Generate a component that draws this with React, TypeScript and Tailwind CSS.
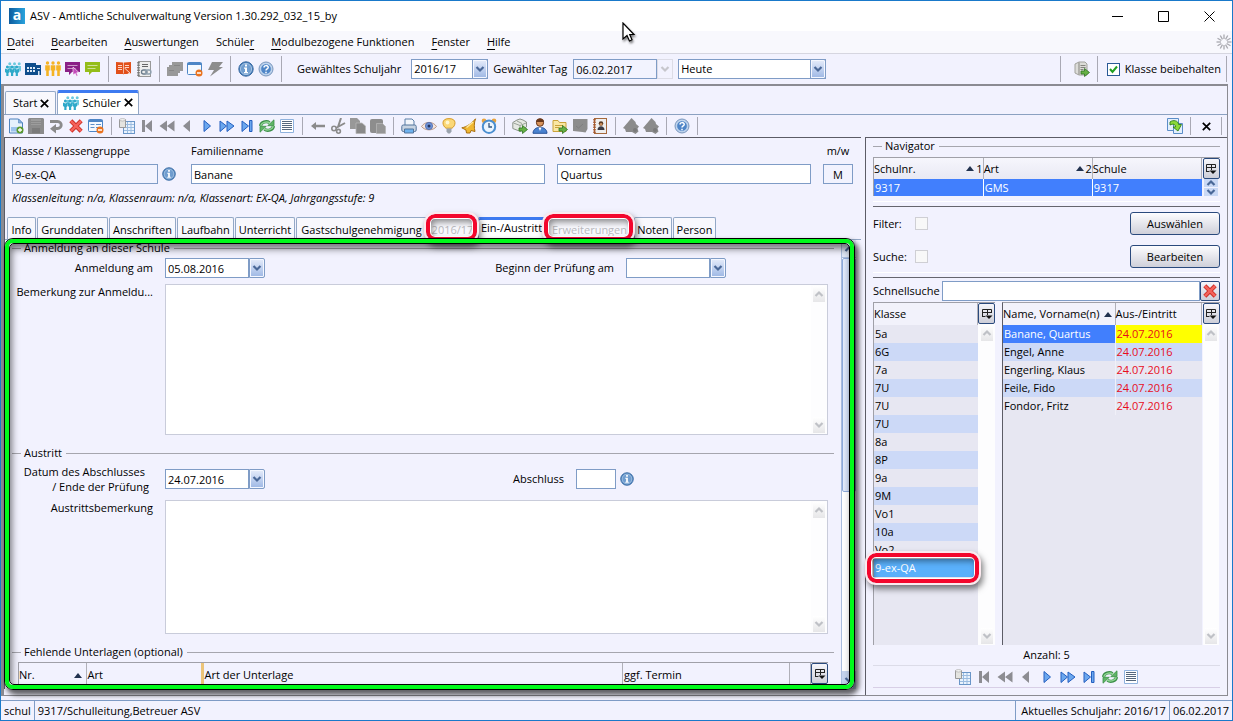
import type { ReactNode } from "react";
import { clsx } from "clsx";

/* ---------- icons ---------- */

const S = ({ children, size = 16 }: { children: ReactNode; size?: number }) => (
  <svg width={size} height={size} viewBox="0 0 16 16" aria-hidden="true" className="shrink-0">
    {children}
  </svg>
);

const People = ({ color }: { color: string }) => (
  <S>
    {[2.5, 8, 13.5].map((x) => (
      <g key={x} fill={color}>
        <circle cx={x} cy="2" r="1.7" />
        <path d={`M${x - 2.3} 4.2h4.600v5.400h-1V15h-2.600V9.600h-1z`} />
      </g>
    ))}
  </S>
);

const Pupils = () => (
  <S>
    <g fill="#6cc9df">
      <circle cx="4.800" cy="2.800" r="1.500" />
      <circle cx="9.500" cy="2.800" r="1.500" />
      <circle cx="14.200" cy="2.800" r="1.500" />
      <path d="M3.500 5h3v4h-3zM8 5h3v4H8zM12.700 5H16v4.500l-1.300 1.500z" />
    </g>
    <g fill="#2fa9c9">
      <circle cx="2.400" cy="6" r="1.500" />
      <circle cx="7" cy="6" r="1.500" />
      <circle cx="11.700" cy="6" r="1.500" />
      <path d="M0 7.500l2.400 1 2.300-1v3.500l-1.200 1V15H1.300v-3L0 11zM5 7.500l2.200 1 2.200-1v3.500l-1.200 1V15H6v-3l-1-1zM9.700 7.500l2.200 1 2.200-1v3.500l-1.200 1V15h-2.200v-3l-1-1z" />
    </g>
  </S>
);

const School = () => (
  <S>
    <path d="M0 2h11v2h5v10H0z" fill="#0f4d8c" />
    <path d="M2 6h2v2H2zm3 0h2v2H5zm3 0h2v2H8zM2 9h2v2H2zm3 0h2v2H5zm3 0h2v2H8zm4-2h3v1h-3zm1 3h1.500v4H13z" fill="#dce8f4" />
  </S>
);

const Board = ({ color, cursor = false }: { color: string; cursor?: boolean }) => (
  <S>
    <path d="M0 1h15v10H7l-3 3v-3H0z" fill={color} />
    <path d="M2.500 4.500h10M2.500 7.500h8" stroke="#fff" strokeWidth="1" opacity=".55" />
    {cursor && <path d="M8 6l6 5.500-2.300.3 1.200 2.900-1.400.6-1.200-2.800L8 14z" fill="#c34bbb" stroke="#fff" strokeWidth=".6" />}
  </S>
);

const RedBook = () => (
  <S>
    <path d="M0 1l7 .5.5.5.5-.5L15 1v12H8l-.5.5L7 13H0z" fill="#e2501b" />
    <path d="M2 4.500h4M2 6.500h4M2 8.500h4M9 4.500h4M9 6.500h4" stroke="#fbd3c4" />
    <path d="M7.500 1.500v11" stroke="#fff" strokeWidth=".6" />
    <path d="M8.500 7l6 5.500-2.500.2 1.300 2.800" fill="#e2501b" stroke="#fff" strokeWidth=".8" />
  </S>
);

const Notebook = ({ person = false }: { person?: boolean }) => (
  <S>
    <rect x="2.500" y=".5" width="12" height="15" fill="#eee" stroke={person ? "#a5693c" : "#999"} />
    <path d="M2.500 1v14" stroke={person ? "#a5562c" : "#777"} strokeWidth="2.500" strokeDasharray="1.500 1" />
    {person ? (
      <>
        <circle cx="9" cy="5.500" r="2.300" fill="#5b3a22" />
        <circle cx="9" cy="6.300" r="1.400" fill="#c98d5c" />
        <path d="M5.500 12c0-5 7-5 7 0z" fill="#3a3a44" />
      </>
    ) : (
      <>
        <path d="M6 3.500h6M6 5.500h6" stroke="#666" />
        <rect x="5.500" y="9" width="5.500" height="4" rx="2" fill="none" stroke="#6b7c8c" strokeWidth="1.300" />
        <rect x="9.500" y="9" width="5.500" height="4" rx="2" fill="none" stroke="#8fa0ae" strokeWidth="1.300" />
      </>
    )}
  </S>
);

const GrayStack = () => (
  <S>
    <path d="M5 1h11v9h-3v2h-2v3H0V6h2V4h3z" fill="#999" />
    <path d="M2 9.500h5M7 4.500h6" stroke="#868686" />
  </S>
);

const FormMinus = ({ lines = false }: { lines?: boolean }) => (
  <S>
    <rect x=".5" y="1.500" width="14" height="12" rx="1" fill="#f4f9ff" stroke="#4d86c6" />
    <path d="M.5 3h14" stroke="#4d86c6" strokeWidth="2" />
    {lines && <path d="M2.500 6.500h4m1.500 0h5M2.500 9.500h4m1.500 0h3" stroke="#5d8fc9" />}
    <circle cx="12" cy="12" r="3.500" fill="#e9731f" />
    <path d="M10 12h4" stroke="#fff" strokeWidth="1.500" />
  </S>
);

const Flash = () => (
  <S>
    <path d="M5 1h11l-4 5h4L3 15.500l4-6.500H1z" fill="#8d8d8d" />
  </S>
);

const Info = ({ size = 16 }: { size?: number }) => (
  <S size={size}>
    <circle cx="8" cy="8" r="7.200" fill="#4c82bd" stroke="#3a6ba3" />
    <circle cx="8" cy="8" r="5.600" fill="#6f9dcf" stroke="#b9d1ea" strokeWidth=".8" />
    <path d="M7 3.500h2v2H7zM6 6.500h3V11h1v1.200H6V11h1V7.700H6z" fill="#fff" />
  </S>
);

const Help = () => (
  <S>
    <circle cx="8" cy="8" r="7" fill="#b9d0ec" stroke="#7b97bd" />
    <circle cx="8" cy="8" r="5.300" fill="#4f86c8" stroke="#dbe7f5" strokeWidth=".6" />
    <path d="M6 6.600C6 4 10.200 4 10.200 6.400 10.200 8 8 7.800 8 9.600M8 10.800v1.400" fill="none" stroke="#fff" strokeWidth="1.500" />
  </S>
);

const NewDoc = () => (
  <S>
    <path d="M1.500 1h9l4 4v10h-13z" fill="#e6f1fc" stroke="#4f83bd" />
    <path d="M10.500 1v4h4z" fill="#8cb4df" stroke="#4f83bd" strokeWidth=".6" />
    <path d="M3 9h7v4.500H3z" fill="#9cc3ec" />
    <circle cx="12" cy="12" r="3.500" fill="#5c9a2e" />
    <path d="M10 12h4M12 10v4" stroke="#fff" strokeWidth="1.300" />
  </S>
);

const Disk = () => (
  <S>
    <path d="M0 1l1-1h14l1 1v15H0z" fill="#8b8b8b" />
    <path d="M3 1h10v6H3z" fill="#9c9c9c" />
    <path d="M4 10h8v5H4z" fill="#7b7b7b" />
    <path d="M3 3.500h10M3 5.500h10" stroke="#898989" strokeWidth="1" />
  </S>
);

const Undo = () => (
  <S>
    <path d="M2 3.500h7.500c5 0 5 7 0 7H7" fill="none" stroke="#8b8b8b" strokeWidth="2.800" />
    <path d="M8 6v9.500L2 10.700z" fill="#8b8b8b" />
  </S>
);

const RedX = () => (
  <S>
    <path d="M2.800 2.800l10.400 10.400M13.200 2.800L2.800 13.200" stroke="#c8281f" strokeWidth="4.200" />
    <path d="M2.800 2.800l10.400 10.400M13.200 2.800L2.800 13.200" stroke="#f4625a" strokeWidth="2.600" />
  </S>
);

const DataSheet = () => (
  <S>
    <rect x="4.500" y="3.500" width="11" height="12" fill="#eaf3fd" stroke="#6a96c8" />
    <path d="M5 6.500h10M5 9.500h10M5 12.500h10M8.500 4v11M12 4v11" stroke="#9bbce0" />
    <path d="M.5 1.500h6v8h-6z" fill="#e4e4e0" stroke="#999" />
    <ellipse cx="3.500" cy="1.800" rx="3" ry="1.200" fill="#f6f6f4" stroke="#aaa" strokeWidth=".7" />
  </S>
);

const First = () => (
  <S>
    <path d="M3 2h3v12H3zM13 2v12L6 8z" fill="#8d8d92" />
  </S>
);
const Rew = () => (
  <S>
    <path d="M8 2.500v11L.5 8zM15.500 2.500v11L8 8z" fill="#8d8d92" />
  </S>
);
const Prev = () => (
  <S>
    <path d="M11 2v12L4 8z" fill="#8d8d92" />
  </S>
);
const Next = () => (
  <S>
    <path d="M5 2.500v11L11.500 8z" fill="#6ba7ee" stroke="#245fc0" />
  </S>
);
const Fwd = () => (
  <S>
    <path d="M1 3v10.500L7.500 8zM8 3v10.500L15 8z" fill="#6ba7ee" stroke="#245fc0" />
  </S>
);
const Last = () => (
  <S>
    <path d="M3 3v10.500L9.500 8zM10.500 2.500h2.500v11h-2.500z" fill="#6ba7ee" stroke="#245fc0" />
  </S>
);

const RefreshArc = () => (
  <>
    <path d="M1.500 8C2 4 7.500 2.500 10.500 4.700" fill="none" stroke="#3b8f48" strokeWidth="3.200" />
    <path d="M15 1.800v5.900H8.700z" fill="#5fb566" stroke="#3b8f48" strokeWidth=".8" />
    <path d="M1.800 7.800C2.500 4.400 7.500 3 10.800 5" fill="none" stroke="#8fd593" strokeWidth="1.500" />
  </>
);

const Refresh = () => (
  <S>
    <RefreshArc />
    <g transform="rotate(180 8 8)">
      <RefreshArc />
    </g>
  </S>
);

const ListIcon = () => (
  <S>
    <path d="M1.500 1.500h13v13h-13z" fill="#fff" stroke="#8fb2dd" />
    <path d="M3 3.500h10M3 5.500h10M3 7.500h10M3 9.500h10M3 11.500h10" stroke="#55677c" />
  </S>
);

const ArrowLeft = () => (
  <S>
    <path d="M1 8l5-4v2.800h9v2.400H6V12z" fill="#8b8b8b" />
  </S>
);

const Scissors = () => (
  <S>
    <path d="M11 0L8 9M15 5L6 10" stroke="#8b8b8b" strokeWidth="2" />
    <circle cx="4" cy="10.500" r="2.200" fill="none" stroke="#8b8b8b" strokeWidth="1.600" />
    <circle cx="8.500" cy="13.300" r="1.900" fill="none" stroke="#8b8b8b" strokeWidth="1.600" />
  </S>
);

const Copy = () => (
  <S>
    <path d="M0 0h7l3 3v8H0z" fill="#989898" />
    <path d="M6 5h6l3.500 3v7.500H6z" fill="#8a8a8a" stroke="#b5b5b5" strokeWidth=".8" />
  </S>
);

const Paste = () => (
  <S>
    <rect x="0" y="1" width="13" height="14" rx="2" fill="#8d8d8d" />
    <path d="M6.500 5.500h6l3 3v7h-9z" fill="#969696" stroke="#b5b5b5" strokeWidth=".8" />
  </S>
);

const Printer = () => (
  <S>
    <path d="M4 1h7l2 2v5H4z" fill="#f3f6fb" stroke="#5a7fa8" />
    <rect x=".8" y="7" width="14.400" height="6.500" rx="1.500" fill="#c8d4e2" stroke="#53749b" />
    <path d="M3.500 11h9v4h-9z" fill="#6eb2ee" stroke="#53749b" />
  </S>
);

const Eye = () => (
  <S>
    <path d="M.5 8.500C4 3 12 3 15.500 8.500 12 13 4 13 .5 8.500z" fill="#f6e6dd" stroke="#b99a8b" />
    <circle cx="8" cy="8" r="3.600" fill="#6f93d6" stroke="#4b68ad" strokeWidth=".8" />
    <circle cx="8" cy="8" r="1.500" fill="#24345f" />
  </S>
);

const Bulb = () => (
  <S>
    <path d="M8 .6c-8.500 0-6.500 7.500-3 9.600h6c3.500-2.100 5.500-9.600-3-9.600z" fill="#fbd876" stroke="#d59b29" />
    <circle cx="6.500" cy="4.500" r="1.900" fill="#fff6cf" />
    <path d="M5.500 10.500h5v3l-1.500 2H7l-1.500-2z" fill="#9aa3ad" />
  </S>
);

const Horn = () => (
  <S>
    <path d="M14.500.8c-1.500 4-1.500 9-.5 12.700L10 12.500l-1 2.500H5.500L5 12 .8 9.800C6 9 11 5 14.500.8z" fill="#f0b832" stroke="#a86f10" />
    <path d="M12 4L5.500 9.500" stroke="#ffe9a0" strokeWidth="1.500" />
  </S>
);

const Alarm = () => (
  <S>
    <circle cx="3" cy="2.800" r="2.300" fill="#e8a33d" />
    <circle cx="13" cy="2.800" r="2.300" fill="#e8a33d" />
    <circle cx="8" cy="8.700" r="6.200" fill="#eaf4fe" stroke="#4b8fd0" strokeWidth="2" />
    <path d="M8 5v4h3" fill="none" stroke="#31557e" strokeWidth="1.300" />
  </S>
);

const GreenArrow = () => (
  <path d="M7 10h3.500V7.500L15.500 11.500l-5 4V13H7z" fill="#66b145" stroke="#2f7322" strokeWidth=".8" />
);

const Cubes = () => (
  <S>
    <path d="M5 2l3-1 3 1 3.500 2v5l-6 4.500L.8 10.500V4.500z" fill="#e6e9e3" stroke="#8c948a" />
    <path d="M1.500 5L8 7.500 14 5M8 7.500V13M5 3l5 2.500" stroke="#9aa298" fill="none" />
    <GreenArrow />
  </S>
);

const Person = () => (
  <S>
    <circle cx="8" cy="4.700" r="3.600" fill="#d9945c" stroke="#69381b" />
    <path d="M4 4c0-5 8-5 8 0z" fill="#69381b" />
    <path d="M1 15.300c0-8 14-8 14 0z" fill="#4a82cf" stroke="#2a549a" />
    <path d="M6.500 9.500L8 13l1.500-3.500z" fill="#fff" />
  </S>
);

const FolderArrow = () => (
  <S>
    <path d="M1 2.500h5l1.500 2H14v9H1z" fill="#f9e7a4" stroke="#c9a23a" />
    <path d="M3 7.500h8M3 9.500h4" stroke="#c9a23a" />
    <GreenArrow />
  </S>
);

const GrayNote = () => (
  <S>
    <path d="M1 1h14.500v10l-2 3.500-3-.5-9.500-1z" fill="#8d8d8d" />
    <path d="M4 8l2.500 2L11 6" stroke="#7f7f7f" fill="none" />
  </S>
);

const GrayHouse = () => (
  <S>
    <path d="M8.500 0l4 4 .5 2 3 2.500-1.500 2 1 3-3 2.500L9 14H3l-1-3L0 10z" fill="#8b8b8b" />
    <circle cx="12" cy="12" r="2" fill="#7a7a7a" />
  </S>
);

const DbArrow = () => (
  <S>
    <path d="M1 3l4-2h6l2 2v11H5l-4-2z" fill="#dcdcd8" stroke="#a2a29c" />
    <path d="M5 1.500v12M6.500 4.500h5M6.500 6.500h5M6.500 8.500h3" stroke="#85857f" />
    <GreenArrow />
  </S>
);

const Sync = () => (
  <S>
    <path d="M.5.5h11v12H.5z" fill="#e3effc" stroke="#5b8dc8" />
    <path d="M6.500 5.500h9v10h-9z" fill="#e3effc" stroke="#5b8dc8" />
    <path d="M3 4c3-2.500 8.500-1.500 8.500 2.500H14.500l-3.500 6.500-5-4h2.500C8.500 6 6 5.500 3 7z" fill="#8bd93a" stroke="#2f7d18" strokeWidth=".9" />
  </S>
);

const ColumnPicker = () => (
  <svg width="12" height="12" viewBox="0 0 12 12" aria-hidden="true">
    <path d="M1.500 9v-7.500h9V5M1 4.500h10M6.500 1.500V7M1 8.500h3.500" fill="none" stroke="#222" />
    <path d="M4.500 7.500h7L8 11z" fill="#111" />
  </svg>
);

const Chevron = ({ up = false, color = "#4a6898" }: { up?: boolean; color?: string }) => (
  <svg width="10" height="8" viewBox="0 0 10 8" aria-hidden="true">
    <path d={up ? "M1.500 6L5 2.500 8.500 6" : "M1.500 2L5 5.500 8.500 2"} fill="none" stroke={color} strokeWidth="2.200" />
  </svg>
);

const SortUp = () => (
  <svg width="8" height="5" viewBox="0 0 8 5" aria-hidden="true" className="shrink-0">
    <path d="M0 5h8L4 0z" fill="#22324f" />
  </svg>
);

/* ---------- small building blocks ---------- */

const Sep = () => <span className="mx-[5px] h-[26px] w-px shrink-0 bg-[#a9a9b4]" />;
const ShortSep = () => <span className="mx-[5px] h-[18px] w-px shrink-0 bg-[#a9a9b4]" />;

const Tool = ({ label, children }: { label: string; children: ReactNode }) => (
  <button type="button" aria-label={label} className="flex h-5 w-5 shrink-0 items-center justify-center">
    {children}
  </button>
);

const Close = ({ label }: { label: string }) => (
  <button type="button" aria-label={label}>
    <svg width="9" height="9" viewBox="0 0 9 9" aria-hidden="true">
      <path d="M.8.8l7.400 7.400M8.200.8L.8 8.200" stroke="#000" strokeWidth="1.700" />
    </svg>
  </button>
);

const dropClass =
  "flex h-5 w-4 shrink-0 items-center justify-center rounded-r-[2px] border border-[#7f9cc6] bg-linear-to-b from-[#e6ecfa] to-[#9db7e4] inset-ring inset-ring-[#f4f7ff]";

function DateBox({ id, label, value }: { id: string; label: string; value: string }) {
  return (
    <div className="flex">
      <input id={id} defaultValue={value} className="h-5 w-[84px] border border-[#7f9cc6] bg-white px-[2px]" />
      <button type="button" aria-label={`${label} auswählen`} className={dropClass}>
        <Chevron />
      </button>
    </div>
  );
}

function SelectBox({ id, value, width }: { id: string; value: string; width: string }) {
  return (
    <div className={clsx("relative flex", width)}>
      <select id={id} className="h-5 w-full appearance-none border border-[#7f9cc6] bg-white px-[2px] pr-4">
        <option>{value}</option>
      </select>
      <span className="pointer-events-none absolute right-0 top-0">
        <span className={dropClass}>
          <Chevron />
        </span>
      </span>
    </div>
  );
}

const ScrollArrow = ({ up = false }: { up?: boolean }) => (
  <button
    type="button"
    aria-label={up ? "Nach oben" : "Nach unten"}
    className="flex h-4 w-3 items-center justify-center bg-linear-to-b from-white to-[#e6e6e8]"
  >
    <Chevron up={up} color="#bfc1c6" />
  </button>
);

const ScrollTrack = () => (
  <div className="flex w-4 shrink-0 flex-col items-center justify-between bg-[#fdfdfe] py-px">
    <ScrollArrow up />
    <ScrollArrow />
  </div>
);

function TextBox({ id, height }: { id: string; height: string }) {
  return (
    <div className={clsx("flex min-w-0 flex-1 border border-[#c9ccda] bg-white", height)}>
      <textarea id={id} className="min-w-0 flex-1 resize-none px-[2px] outline-none" />
      <ScrollTrack />
    </div>
  );
}

const Legend = ({ children }: { children: ReactNode }) => (
  <div className="flex h-4 items-center">
    <span className="mr-[3px] h-px w-[9px] bg-[#a6a6ae]" />
    <span>{children}</span>
    <span className="ml-1 h-px flex-1 bg-[#a6a6ae]" />
  </div>
);

const PickerButton = () => (
  <button
    type="button"
    aria-label="Spalten wählen"
    className="flex h-[21px] w-[17px] shrink-0 items-center justify-center rounded-[2px] border border-[#2a4a7d] bg-linear-to-b from-[#f6f6fb] to-[#cdced8]"
  >
    <ColumnPicker />
  </button>
);

const RedMark = ({ place }: { place: string }) => (
  <span
    className={clsx(
      "pointer-events-none absolute z-10 rounded-[9px] border-[4px] border-[#f3062c] outline-2 outline-[#fbe9ee] shadow-[inset_0_0_0_1px_#fff,inset_2px_4px_6px_rgba(0,0,0,0.45),2px_4px_6px_2px_rgba(0,0,0,0.5)]",
      place,
    )}
  />
);

const NavTools = () => (
  <>
    <Tool label="Datenblatt"><DataSheet /></Tool>
    <Tool label="Erster"><First /></Tool>
    <Tool label="Schnell zurück"><Rew /></Tool>
    <Tool label="Zurück"><Prev /></Tool>
    <Tool label="Weiter"><Next /></Tool>
    <Tool label="Schnell vor"><Fwd /></Tool>
    <Tool label="Letzter"><Last /></Tool>
    <Tool label="Aktualisieren"><Refresh /></Tool>
    <Tool label="Liste"><ListIcon /></Tool>
  </>
);

/* ---------- window chrome ---------- */

function TitleBar() {
  return (
    <header className="flex h-[30px] shrink-0 items-center bg-white pl-2">
      <span className="mr-[5px] flex h-4 w-4 items-center justify-center bg-linear-to-r from-[#0d5c9e] to-[#2aa3dd] pb-[2px] text-[14px] font-bold text-white">
        a
      </span>
      <h1 className="flex-1">ASV - Amtliche Schulverwaltung Version 1.30.292_032_15_by</h1>
      <button type="button" aria-label="Minimieren" className="flex w-[46px] justify-center">
        <svg width="11" height="11" viewBox="0 0 11 11"><path d="M0 5.500h11" stroke="#000" /></svg>
      </button>
      <button type="button" aria-label="Maximieren" className="flex w-[46px] justify-center">
        <svg width="11" height="11" viewBox="0 0 11 11"><path d="M.5.5h10v10H.5z" fill="none" stroke="#000" /></svg>
      </button>
      <button type="button" aria-label="Schließen" className="flex w-[46px] justify-center">
        <svg width="11" height="11" viewBox="0 0 11 11"><path d="M.5.5l10 10M10.500.5l-10 10" stroke="#000" /></svg>
      </button>
    </header>
  );
}

const menus: [string, string, string][] = [
  ["", "D", "atei"],
  ["", "B", "earbeiten"],
  ["", "A", "uswertungen"],
  ["Schüle", "r", ""],
  ["", "M", "odulbezogene Funktionen"],
  ["", "F", "enster"],
  ["", "H", "ilfe"],
];

function MenuBar() {
  return (
    <nav className="flex h-[23px] shrink-0 items-center gap-[17px] border-b border-[#d6d6e0] bg-[#f8f8fd] pl-[6px]">
      {menus.map(([pre, key, post]) => (
        <button type="button" key={pre + key + post} className="whitespace-nowrap">
          {pre}
          <span className="underline underline-offset-[3px]">{key}</span>
          {post}
        </button>
      ))}
      <svg width="16" height="16" viewBox="0 0 16 16" className="ml-auto" aria-hidden="true">
        {[0, 30, 60, 90, 120, 150, 180, 210, 240, 270, 300, 330].map((a) => (
          <path key={a} d="M8 .5v4.500" stroke="#a9a9b0" strokeWidth="1.300" transform={`rotate(${a} 8 8)`} />
        ))}
      </svg>
    </nav>
  );
}

function MainToolbar() {
  return (
    <div className="flex h-[30px] shrink-0 items-center bg-[#f2f2fe] pl-[2px]">
      <Tool label="Schüler"><Pupils /></Tool>
      <Tool label="Schule"><School /></Tool>
      <Tool label="Klassen"><People color="#f5b324" /></Tool>
      <Tool label="Unterricht"><Board color="#8a1f86" cursor /></Tool>
      <Tool label="Nachrichten"><Board color="#94bd19" /></Tool>
      <Sep />
      <Tool label="Buch"><RedBook /></Tool>
      <Tool label="Notizbuch"><Notebook /></Tool>
      <Sep />
      <Tool label="Stapel"><GrayStack /></Tool>
      <Tool label="Formular schließen"><FormMinus /></Tool>
      <Tool label="Schnellzugriff"><Flash /></Tool>
      <Sep />
      <Tool label="Info"><Info /></Tool>
      <Tool label="Hilfe"><Help /></Tool>
      <Sep />
      <label htmlFor="jahr" className="mx-[10px] whitespace-nowrap">Gewähltes Schuljahr</label>
      <SelectBox id="jahr" value="2016/17" width="w-[77px]" />
      <label htmlFor="tag" className="ml-[5px] mr-[6px] whitespace-nowrap">Gewählter Tag</label>
      <input id="tag" defaultValue="06.02.2017" readOnly className="h-5 w-[84px] border border-[#7f9cc6] bg-[#f2f3fe] px-[2px]" />
      <button type="button" disabled aria-label="Tag auswählen" className="flex h-5 w-4 items-center justify-center border border-[#dcdce6]">
        <Chevron color="#c6c6cc" />
      </button>
      <div className="ml-[5px]">
        <SelectBox id="heute" value="Heute" width="w-[148px]" />
      </div>
      <div className="ml-auto flex items-center">
        <Sep />
        <span className="ml-[6px]"><Tool label="Exportieren"><DbArrow /></Tool></span>
        <Sep />
        <label className="flex items-center gap-[5px] whitespace-nowrap pl-1">
          <span className="relative flex">
            <input type="checkbox" defaultChecked className="peer h-[13px] w-[13px] appearance-none border border-[#2a5a96] bg-white" />
            <svg width="13" height="13" viewBox="0 0 13 13" className="pointer-events-none absolute inset-0 hidden peer-checked:block" aria-hidden="true">
              <path d="M3 6l2.500 3L10 3.500" fill="none" stroke="#22a022" strokeWidth="2" />
            </svg>
          </span>
          Klasse beibehalten
        </label>
        <Sep />
      </div>
    </div>
  );
}

function DocumentTabs() {
  return (
    <div className="flex items-end bg-[#f2f2fe] pl-px pt-1">
      <div className="flex h-[23px] items-center gap-[3px] rounded-t-[2px] border border-b-0 border-[#93a8c6] bg-[#f8f8fd] pl-[7px] pr-[6px]">
        Start <Close label="Start schließen" />
      </div>
      <div className="ml-px flex h-6 items-center gap-[3px] rounded-t-[2px] border border-b-0 border-[#93a8c6] border-t-[#3d7af0] bg-white px-[5px] inset-shadow-[0_2px_0_#3d7af0]">
        <Pupils /> Schüler <Close label="Schüler schließen" />
      </div>
    </div>
  );
}

function RecordToolbar() {
  return (
    <div className="flex h-[23px] shrink-0 items-center border-t border-[#8ba1c1] bg-[#f2f2fe] pl-[2px]">
      <Tool label="Neu"><NewDoc /></Tool>
      <Tool label="Speichern"><Disk /></Tool>
      <Tool label="Rückgängig"><Undo /></Tool>
      <Tool label="Löschen"><RedX /></Tool>
      <Tool label="Formular leeren"><FormMinus lines /></Tool>
      <ShortSep />
      <NavTools />
      <ShortSep />
      <Tool label="Zurückgehen"><ArrowLeft /></Tool>
      <Tool label="Ausschneiden"><Scissors /></Tool>
      <Tool label="Kopieren"><Copy /></Tool>
      <Tool label="Einfügen"><Paste /></Tool>
      <ShortSep />
      <Tool label="Drucken"><Printer /></Tool>
      <Tool label="Vorschau"><Eye /></Tool>
      <Tool label="Hinweis"><Bulb /></Tool>
      <Tool label="Signal"><Horn /></Tool>
      <Tool label="Wiedervorlage"><Alarm /></Tool>
      <ShortSep />
      <Tool label="Module"><Cubes /></Tool>
      <Tool label="Person"><Person /></Tool>
      <Tool label="Ordner"><FolderArrow /></Tool>
      <Tool label="Notiz"><GrayNote /></Tool>
      <Tool label="Adressbuch"><Notebook person /></Tool>
      <ShortSep />
      <Tool label="Haus"><GrayHouse /></Tool>
      <Tool label="Haus wechseln"><GrayHouse /></Tool>
      <ShortSep />
      <Tool label="Hilfe"><Help /></Tool>
      <ShortSep />
      <div className="ml-auto flex items-center">
        <Tool label="Abgleichen"><Sync /></Tool>
        <ShortSep />
        <span className="flex w-5 justify-center"><Close label="Modul schließen" /></span>
        <ShortSep />
      </div>
    </div>
  );
}

/* ---------- record form ---------- */

const tabs: { name: string; width: string; off?: boolean; active?: boolean }[] = [
  { name: "Info", width: "w-[29px]" },
  { name: "Grunddaten", width: "w-[71px]" },
  { name: "Anschriften", width: "w-[67px]" },
  { name: "Laufbahn", width: "w-[57px]" },
  { name: "Unterricht", width: "w-[60px]" },
  { name: "Gastschulgenehmigung", width: "w-[131px]" },
  { name: "2016/17", width: "w-[49px]", off: true },
  { name: "Ein-/Austritt", width: "w-[67px]", active: true },
  { name: "Erweiterungen", width: "w-[87px]", off: true },
  { name: "Noten", width: "w-[38px]" },
  { name: "Person", width: "w-[43px]" },
];

const fieldClass = "h-5 w-full border border-[#7f9cc6] px-[2px]";

function RecordHead() {
  return (
    <div className="pl-[7px] pr-2 pt-[5px]">
      <div className="flex items-end">
        <div className="flex w-[146px] shrink-0 flex-col gap-[5px]">
          <label htmlFor="klasse">Klasse / Klassengruppe</label>
          <input id="klasse" readOnly defaultValue="9-ex-QA" className={clsx(fieldClass, "bg-[#f2f3fe]")} />
        </div>
        <button type="button" aria-label="Klasseninfo" className="mb-[3px] ml-1 mr-[15px]"><Info size={14} /></button>
        <div className="flex flex-[355] flex-col gap-[5px]">
          <label htmlFor="name">Familienname</label>
          <input id="name" defaultValue="Banane" className={clsx(fieldClass, "bg-white")} />
        </div>
        <div className="ml-3 flex flex-[254] flex-col gap-[5px]">
          <label htmlFor="vorname">Vornamen</label>
          <input id="vorname" defaultValue="Quartus" className={clsx(fieldClass, "bg-white")} />
        </div>
        <div className="ml-3 flex w-[30px] shrink-0 flex-col gap-[5px]">
          <label htmlFor="mw" className="text-center">m/w</label>
          <input id="mw" readOnly defaultValue="M" className={clsx(fieldClass, "bg-[#f2f3fe] text-center")} />
        </div>
      </div>
      <p className="mt-[6px] italic">Klassenleitung: n/a, Klassenraum: n/a, Klassenart: EX-QA, Jahrgangsstufe: 9</p>
    </div>
  );
}

function RecordTabs() {
  return (
    <div role="tablist" className="mt-[11px] flex gap-px pl-[2px]">
      {tabs.map((t) => (
        <div key={t.name} className={clsx("relative flex", t.width)}>
          <button
            type="button"
            role="tab"
            aria-selected={!!t.active}
            disabled={t.off}
            className={clsx(
              "flex h-[22px] w-full justify-center whitespace-nowrap rounded-t-[2px] border border-b-0 border-[#93a8c6]",
              t.active ? "bg-white pt-[2px] border-t-[#3d7af0] inset-shadow-[0_2px_0_#3d7af0]" : "bg-[#f8f8fd] pt-1",
              t.off && "text-[#b9b9bd]",
            )}
          >
            {t.name}
          </button>
          {t.off && <RedMark place="-left-[2px] right-0 -top-[3px] -bottom-[2px]" />}
        </div>
      ))}
    </div>
  );
}

const labelClass = "w-[141px] shrink-0 whitespace-nowrap text-right";

function RecordForm() {
  return (
    <div className="relative flex min-h-0 flex-1">
      <div className="flex min-h-0 flex-1 overflow-hidden border-t border-[#93a8c6] pl-[7px] pr-[5px]">
        <div className="min-w-0 flex-1 pr-[7px]">
          <Legend>Anmeldung an dieser Schule</Legend>
          <div className="mt-[2px] flex items-center">
            <label htmlFor="anmeldung" className={labelClass}>Anmeldung am</label>
            <div className="ml-3"><DateBox id="anmeldung" label="Anmeldung" value="05.08.2016" /></div>
            <label htmlFor="beginn" className="ml-auto mr-3">Beginn der Prüfung am</label>
            <div className="mr-[108px]"><DateBox id="beginn" label="Beginn" value="" /></div>
          </div>
          <div className="mt-[6px] flex pr-[6px]">
            <label htmlFor="bemerkung" className={labelClass}>Bemerkung zur Anmeldu...</label>
            <div className="ml-3 flex min-w-0 flex-1"><TextBox id="bemerkung" height="h-[151px]" /></div>
          </div>
          <div className="mt-[10px]"><Legend>Austritt</Legend></div>
          <div className="mt-[3px] flex items-center">
            <label htmlFor="abschlussdatum" className="w-[141px] shrink-0 pr-1 text-right leading-[15px]">
              <span className="block pr-1">Datum des Abschlusses</span>
              <span className="block">/ Ende der Prüfung</span>
            </label>
            <div className="ml-3"><DateBox id="abschlussdatum" label="Abschlussdatum" value="24.07.2016" /></div>
            <label htmlFor="abschluss" className="ml-auto mr-3">Abschluss</label>
            <input id="abschluss" className="h-5 w-10 border border-[#7f9cc6] bg-white px-[2px]" />
            <button type="button" aria-label="Abschlussinfo" className="ml-1 mr-[200px]"><Info size={14} /></button>
          </div>
          <div className="mt-[6px] flex pr-[6px]">
            <label htmlFor="austritt" className={labelClass}>Austrittsbemerkung</label>
            <div className="ml-3 flex min-w-0 flex-1"><TextBox id="austritt" height="h-[134px]" /></div>
          </div>
          <div className="mt-[10px]"><Legend>Fehlende Unterlagen (optional)</Legend></div>
          <div className="mx-[6px] mt-[2px] flex border-t border-l border-[#a0a0a8]">
            <table className="h-6 flex-1 table-fixed border-collapse text-left">
              <thead>
                <tr>
                  <th className="w-[67px] p-0 font-normal">
                    <span className="flex items-center justify-between pr-1">Nr. <SortUp /></span>
                  </th>
                  <th className="w-[116px] border-l border-[#b0b0b8] p-0 pl-px font-normal">Art</th>
                  <th className="border-l-[3px] border-[#ecc478] p-0 pl-px font-normal">Art der Unterlage</th>
                  <th className="w-[167px] border-l border-[#b0b0b8] p-0 pl-px font-normal">ggf. Termin</th>
                  <th aria-label="Aktion" className="w-[21px] border-x border-[#b0b0b8] p-0" />
                </tr>
              </thead>
            </table>
            <PickerButton />
          </div>
        </div>
        <div className="flex w-[15px] shrink-0 flex-col border-l border-[#a9bcdc] bg-white">
          <button type="button" aria-label="Nach oben" className="flex h-[18px] items-center justify-center border-b border-[#a9bcdc] bg-[#dfe7f7]">
            <Chevron up />
          </button>
          <div className="h-[234px] rounded-[2px] border border-[#8eaadb] bg-linear-to-r from-[#e6edfb] to-[#b4c9ee]" />
          <button type="button" aria-label="Nach unten" className="mt-auto flex h-[18px] items-center justify-center bg-[#c5d3ee]">
            <Chevron />
          </button>
        </div>
      </div>
      <div className="pointer-events-none absolute -bottom-px -left-px right-[6px] -top-px z-20 rounded-[9px] border border-black shadow-[3px_4px_5px_1px_rgba(0,0,0,0.6)]">
        <div className="h-full rounded-[8px] border-4 border-[#00fa1a]">
          <div className="h-full rounded-[5px] border border-black shadow-[inset_2px_5px_7px_rgba(0,0,0,0.5)]" />
        </div>
      </div>
    </div>
  );
}

/* ---------- navigator ---------- */

const classes = ["5a", "6G", "7a", "7U", "7U", "7U", "8a", "8P", "9a", "9M", "Vo1", "10a", "Vo2", "9-ex-QA"];
const pupils = ["Banane, Quartus", "Engel, Anne", "Engerling, Klaus", "Feile, Fido", "Fondor, Fritz"];

const headCell = "border-r border-[#b0b0b8] p-0 font-normal";

const actionClass =
  "h-[23px] w-[90px] rounded-[3px] border border-[#2a4a7d] bg-linear-to-b from-[#fdfdff] to-[#cfd0da]";

function Navigator() {
  return (
    <aside className="flex w-[362px] shrink-0 flex-col border-l border-t border-[#5c5c66] bg-[#f2f2fe] pl-[7px] pr-[7px]">
      <Legend>Navigator</Legend>
      <div className="mt-[3px] flex border-l border-t border-[#a0a0a8]">
        <div className="min-w-0 flex-1">
          <table className="w-full table-fixed border-collapse text-left">
            <thead>
              <tr className="h-[21px] bg-linear-to-b from-[#f6f6fd] to-[#e9e9f3]">
                <th className={headCell}>
                  <span className="flex items-center justify-between">Schulnr. <span className="flex items-center gap-[2px]"><SortUp />1</span></span>
                </th>
                <th className={headCell}>
                  <span className="flex items-center justify-between">Art <span className="flex items-center gap-[2px]"><SortUp />2</span></span>
                </th>
                <th className={headCell}>Schule</th>
              </tr>
            </thead>
            <tbody>
              <tr className="bg-[#417ffd] text-white">
                <td className="h-[17px] border-r border-white p-0 pl-px leading-[17px]">9317</td>
                <td className="border-r border-white p-0 pl-px leading-[17px]">GMS</td>
                <td className="p-0 pl-px leading-[17px]">9317</td>
              </tr>
            </tbody>
          </table>
        </div>
        <div className="flex w-[18px] flex-col items-center">
          <PickerButton />
          <button type="button" aria-label="Zeile hoch" className="flex h-2 w-[14px] items-center justify-center bg-[#c9d8f5]"><Chevron up /></button>
          <button type="button" aria-label="Zeile runter" className="mt-px flex h-2 w-[14px] items-center justify-center bg-[#c9d8f5]"><Chevron /></button>
        </div>
      </div>
      <div className="mt-[5px] h-[6px] border-b border-t border-b-[#66666e] border-t-white" />
      <div className="mt-[5px] flex items-center">
        <label htmlFor="filter" className="w-[42px]">Filter:</label>
        <input id="filter" type="checkbox" className="h-[13px] w-[13px] appearance-none border border-[#cfcfd4] bg-[#f8f8f8]" />
        <button type="button" className={clsx(actionClass, "ml-auto")}>Auswählen</button>
      </div>
      <div className="mt-[10px] flex items-center">
        <label htmlFor="suche" className="w-[42px]">Suche:</label>
        <input id="suche" type="checkbox" className="h-[13px] w-[13px] appearance-none border border-[#cfcfd4] bg-[#f8f8f8]" />
        <button type="button" className={clsx(actionClass, "ml-auto")}>Bearbeiten</button>
      </div>
      <div className="mt-1 h-[6px] border-b border-t border-b-[#66666e] border-t-white" />
      <div className="mt-[3px] flex items-center">
        <label htmlFor="schnellsuche" className="w-[69px] whitespace-nowrap">Schnellsuche</label>
        <input id="schnellsuche" className="h-5 min-w-0 flex-1 border border-[#7f9cc6] bg-white px-[2px]" />
        <button type="button" aria-label="Suche leeren" className="flex h-5 w-5 items-center justify-center rounded-[2px] border border-[#2a4a7d] bg-linear-to-b from-[#f6f6fb] to-[#cdced8]"><RedX /></button>
      </div>

      <div className="mt-px flex min-h-0 flex-1">
        <div className="relative mr-[7px] flex w-[122px] shrink-0 border-l border-t border-[#a0a0a8]">
          <div className="flex-1 bg-[#e7e7f2]">
            <table className="w-full table-fixed border-collapse text-left">
              <thead>
                <tr className="h-[22px] bg-[#f2f2fb]"><th className={headCell}>Klasse</th></tr>
              </thead>
              <tbody>
                {classes.map((c, i) => (
                  <tr
                    key={i}
                    className={clsx(c === "9-ex-QA" ? "bg-[#5ab0fb] text-white" : i % 2 ? "bg-[#ccd9f7]" : "bg-[#e7e7f2]")}
                  >
                    <td className="h-[18px] p-0 pl-px leading-[18px]">
                      {c === "9-ex-QA" ? (
                        <span className="relative block">
                          {c}
                          <RedMark place="-left-[8px] -right-[1px] -top-[6px] -bottom-[6px]" />
                        </span>
                      ) : (
                        c
                      )}
                    </td>
                  </tr>
                ))}
              </tbody>
            </table>
          </div>
          <div className="flex w-[17px] flex-col">
            <PickerButton />
            <div className="flex flex-1 justify-center bg-[#fdfdfe]"><ScrollTrack /></div>
          </div>
        </div>
        <div className="flex min-w-0 flex-1 border-l border-t border-l-[#5c5c66] border-t-[#a0a0a8]">
          <div className="flex-1 bg-[#e7e7f2]">
            <table className="w-full table-fixed border-collapse text-left">
              <thead>
                <tr className="h-[22px] bg-[#f2f2fb]">
                  <th className={clsx(headCell, "w-[112px]")}>
                    <span className="flex items-center justify-between whitespace-nowrap pr-[3px]">Name, Vorname(n) <SortUp /></span>
                  </th>
                  <th className={headCell}>Aus-/Eintritt</th>
                </tr>
              </thead>
              <tbody>
                {pupils.map((p, i) => (
                  <tr key={p} className={i % 2 ? "bg-[#ccd9f7]" : "bg-[#e7e7f2]"}>
                    <td className={clsx("h-[18px] border-r border-[#f0f0f8] p-0 pl-px leading-[18px]", i === 0 && "bg-[#417ffd] text-white")}>{p}</td>
                    <td className={clsx("p-0 pl-px leading-[18px] text-[#e80c1c]", i === 0 && "bg-[#ffff00]")}>24.07.2016</td>
                  </tr>
                ))}
              </tbody>
            </table>
          </div>
          <div className="flex w-[18px] flex-col items-center">
            <PickerButton />
            <div className="flex flex-1 justify-center bg-[#fdfdfe]"><ScrollTrack /></div>
          </div>
        </div>
      </div>

      <p className="mt-[2px] text-center">Anzahl: 5</p>
      <div className="mt-[2px] flex h-[23px] items-center justify-center gap-px border-y border-b-[#d8cfe6] border-t-[#dcdce8]">
        <NavTools />
      </div>
      <div className="h-[7px]" />
    </aside>
  );
}

/* ---------- page ---------- */

export default function App() {
  return (
    <div className="relative flex h-screen flex-col overflow-hidden border border-[#1979ca] bg-[#f2f2fe] font-['Open_Sans','Noto_Sans',sans-serif] text-[11px] leading-4 text-black">
      <TitleBar />
      <MenuBar />
      <MainToolbar />
      <main className="mr-1 flex min-h-0 flex-1 flex-col border-b border-l-[3px] border-t-2 border-[#8b8b92] border-r">
        <DocumentTabs />
        <RecordToolbar />
        <div className="flex min-h-0 flex-1 bg-[#f2f2fe]">
          <section className="mb-[6px] mr-1 flex min-w-0 flex-1 flex-col border-l border-t border-[#5c5c66]">
            <RecordHead />
            <RecordTabs />
            <RecordForm />
          </section>
          <Navigator />
        </div>
      </main>
      <footer className="mt-1 flex h-5 shrink-0 items-center border-t border-[#7f9cc6]">
        <span className="border-r border-[#7f9cc6] px-[3px] leading-5">schul</span>
        <span className="flex-1 border-r border-[#7f9cc6] px-[3px] leading-5">9317/Schulleitung,Betreuer ASV</span>
        <span className="border-r border-[#7f9cc6] pl-[5px] pr-[3px] leading-5">Aktuelles Schuljahr: 2016/17</span>
        <span className="px-[3px] leading-5">06.02.2017</span>
      </footer>
      <svg width="18" height="24" viewBox="0 0 18 24" className="pointer-events-none absolute left-1/2 top-[21px] ml-[5px] drop-shadow-[1px_2px_1px_rgba(0,0,0,0.5)]" aria-hidden="true">
        <path d="M1 1v16l4-3.500 2.500 5.500 2.500-1.200-2.300-5.300H12z" fill="#fff" stroke="#000" strokeWidth="1.200" />
      </svg>
    </div>
  );
}
